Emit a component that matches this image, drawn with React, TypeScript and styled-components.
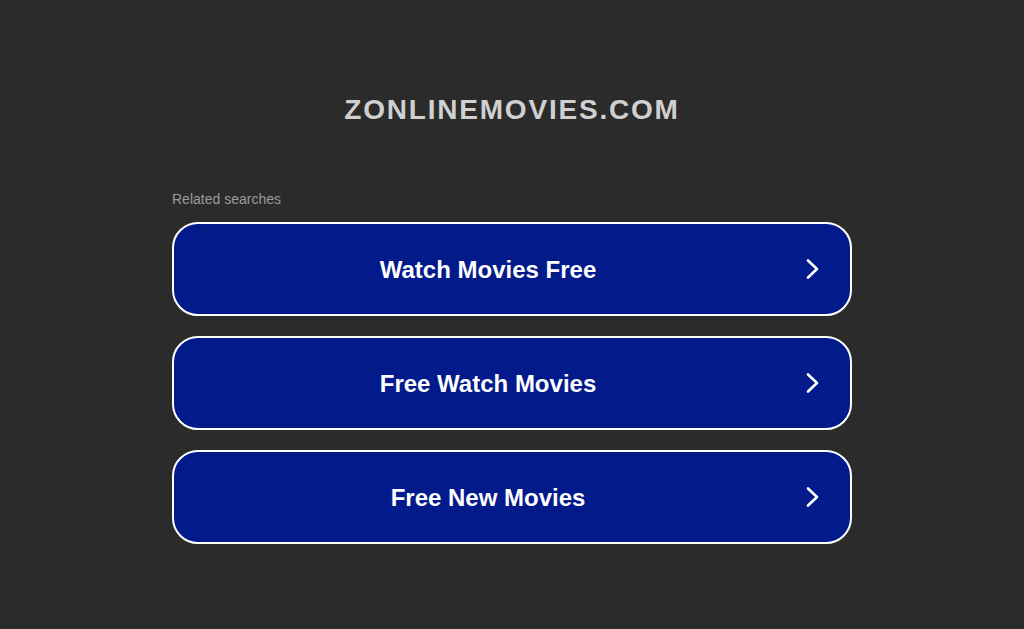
import React from "react";
import styled, { createGlobalStyle } from "styled-components";

const GlobalStyle = createGlobalStyle`
  html, body {
    margin: 0;
    padding: 0;
    background-color: #2b2b2b;
    font-family: "Liberation Sans", Arial, sans-serif;
  }
`;

const Page = styled.div`
  min-height: 629px;
  display: flex;
  flex-direction: column;
  align-items: center;
`;

const Domain = styled.h1`
  margin: 93px 0 0;
  font-size: 28px;
  font-weight: bold;
  letter-spacing: 1.8px;
  color: #d0d0d0;
  line-height: 34px;
`;

const Related = styled.section`
  width: 680px;
  margin-top: 64px;
`;

const Heading = styled.div`
  font-size: 14px;
  color: #9a9a9a;
  line-height: 16px;
  margin-bottom: 15px;
`;

const List = styled.div`
  display: flex;
  flex-direction: column;
  gap: 20px;
`;

const SearchButton = styled.a`
  display: flex;
  align-items: center;
  box-sizing: border-box;
  height: 94px;
  padding-right: 30px;
  background-color: #021a8a;
  border: 2px solid #ffffff;
  border-radius: 26px;
  text-decoration: none;
  cursor: pointer;
`;

const Label = styled.span`
  flex: 1;
  padding-top: 2px;
  text-align: center;
  font-size: 24px;
  font-weight: bold;
  color: #ffffff;
`;

const Chevron = () => (
  <svg width="18" height="22" viewBox="0 0 18 22" fill="none">
    <path
      d="M6 2.5 L15 11 L6 19.5"
      stroke="#ffffff"
      strokeWidth="2.6"
      strokeLinecap="round"
      strokeLinejoin="round"
    />
  </svg>
);

const searches = ["Watch Movies Free", "Free Watch Movies", "Free New Movies"];

const App = () => {
  return (
    <>
      <GlobalStyle />
      <Page>
        <Domain>ZONLINEMOVIES.COM</Domain>
        <Related>
          <Heading>Related searches</Heading>
          <List>
            {searches.map((title) => (
              <SearchButton key={title}>
                <Label>{title}</Label>
                <Chevron />
              </SearchButton>
            ))}
          </List>
        </Related>
      </Page>
    </>
  );
};

export default App;
